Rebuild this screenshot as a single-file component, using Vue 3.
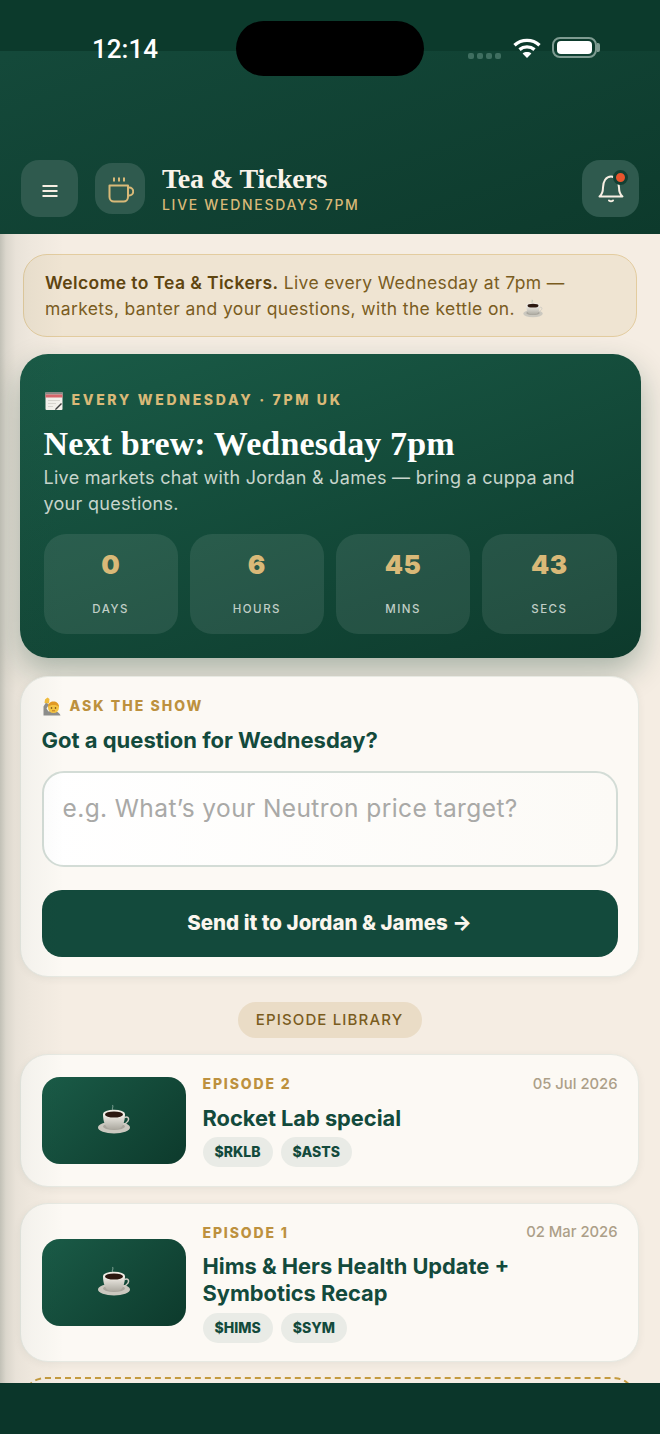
<script setup>
const timer = [
  { value: '0', label: 'DAYS' },
  { value: '6', label: 'HOURS' },
  { value: '45', label: 'MINS' },
  { value: '43', label: 'SECS' },
]
const episodes = [
  { id: 2, number: 'EPISODE 2', date: '05 Jul 2026', title: 'Rocket Lab special', tags: ['$RKLB', '$ASTS'] },
  { id: 1, number: 'EPISODE 1', date: '02 Mar 2026', title: 'Hims & Hers Health Update + Symbotics Recap', tags: ['$HIMS', '$SYM'] },
]
</script>

<template>
  <div class="page">
    <svg class="defs" aria-hidden="true">
      <defs>
        <linearGradient id="cupBody" x1="0" y1="0" x2="0" y2="1">
          <stop offset="0" stop-color="#f3f1ea" />
          <stop offset="1" stop-color="#aeaba2" />
        </linearGradient>
        <symbol id="cup" viewBox="0 0 36 32">
          <path d="M17 6c-2-1.500 1-2.500-.5-5" fill="none" stroke="#8fb0a2" stroke-width="1.200" opacity=".7" />
          <ellipse cx="18" cy="23.500" rx="16" ry="6" fill="#cbc8bf" />
          <ellipse cx="18" cy="22.500" rx="11" ry="3.500" fill="#a9a69d" />
          <path d="M28.500 13.500c3.500-1.500 5 1 3.500 3.500-1 1.800-3 3-5.500 3.500" fill="none" stroke="#cfccc3" stroke-width="1.500" />
          <path d="M7 10c0 7 2 14 7 15h8c5-1 7-8 7-15z" fill="url(#cupBody)" />
          <ellipse cx="18" cy="10" rx="11" ry="4.200" fill="#efece4" />
          <ellipse cx="18" cy="10.500" rx="9" ry="3.100" fill="#2c1810" />
        </symbol>
      </defs>
    </svg>

    <header class="header">
      <div class="status">
        <span class="clock">12:14</span>
        <span class="island"></span>
        <div class="status-right">
          <span class="signal"><i></i><i></i><i></i><i></i></span>
          <svg class="wifi" width="30" height="22" viewBox="0 0 30 22" fill="none" stroke="#fff" stroke-width="3.400">
            <path d="M2.500 8.200C9.500 1.800 20.500 1.800 27.500 8.200" />
            <path d="M7.500 12.600C11.800 9 18.200 9 22.500 12.600" />
            <path d="M15 21l-4.400-4.600c2.500-1.900 6.300-1.900 8.800 0z" fill="#fff" stroke="none" />
          </svg>
          <span class="battery"><span class="battery-fill"></span></span>
          <span class="battery-cap"></span>
        </div>
      </div>
      <div class="appbar">
        <button class="icon-btn menu">
          <svg width="16" height="14" viewBox="0 0 16 14" fill="none" stroke="#f7efe3" stroke-width="2">
            <path d="M0.500 2h15M0.500 7h15M0.500 12h15" />
          </svg>
        </button>
        <span class="logo">
          <svg width="28" height="28" viewBox="0 0 28 28" fill="none" stroke="#d9b978" stroke-width="2" stroke-linejoin="round">
            <path d="M8 2.500v4M13 2.500v4M18 2.500v4" />
            <path d="M3.500 10.500H22V22a4.500 4.500 0 0 1-4.500 4.500H8A4.500 4.500 0 0 1 3.500 22z" />
            <path d="M22 12.500h1.200a3.300 3.300 0 0 1 0 8H22" />
          </svg>
        </span>
        <div class="brand">
          <div class="brand-name">Tea &amp; Tickers</div>
          <div class="brand-sub">LIVE WEDNESDAYS 7PM</div>
        </div>
        <button class="icon-btn">
          <svg width="26" height="30" viewBox="0 0 26 30" fill="none" stroke="#f7efe3" stroke-width="2" stroke-linecap="round" stroke-linejoin="round">
            <path d="M1.500 22.500c2.500-2 3.500-5 3.500-9 0-6 3-11 8-11s8 5 8 11c0 4 1 7 3.500 9z" />
            <path d="M11 26.500c1.200 1 2.800 1 4 0" />
          </svg>
          <span class="dot"></span>
        </button>
      </div>
    </header>

    <main class="content">
      <div class="notice">
        <b>Welcome to Tea &amp; Tickers.</b> Live every Wednesday at 7pm —<br />markets, banter and your questions, with the kettle on. <svg class="notice-cup" width="22" height="20"><use href="#cup" /></svg>
      </div>

      <section class="hero">
        <div class="hero-kicker">
          <svg class="calendar" width="18" height="19" viewBox="0 0 18 19">
            <rect x="0.500" y="1" width="17" height="18" rx="1" fill="#f4f1ec" />
            <rect x="0.500" y="1" width="17" height="2.500" fill="#8a8a86" />
            <rect x="0.500" y="3.500" width="17" height="3" fill="#d8656a" />
            <path d="M3 9.500h12M3 12.500h8M3 15.500h5" stroke="#d9d6d0" stroke-width="1" />
            <path d="M10.500 17.500l5.500-5.500 1 1-5.500 5.500-1.500.500z" fill="#3f3f3f" />
          </svg>
          EVERY WEDNESDAY · 7PM UK
        </div>
        <h1 class="hero-title">Next brew: Wednesday 7pm</h1>
        <p class="hero-sub">Live markets chat with Jordan &amp; James — bring a cuppa and<br />your questions.</p>
        <div class="timer">
          <div v-for="t in timer" :key="t.label" class="cell">
            <div class="cell-value">{{ t.value }}</div>
            <div class="cell-label">{{ t.label }}</div>
          </div>
        </div>
      </section>

      <section class="card ask">
        <div class="ask-kicker">
          <svg class="person" width="18" height="19" viewBox="0 0 18 19">
            <path d="M0.500 18.500V9.500L3 5.500l3 2-2.500 4 2 3c2.500-1 6-1 8 0 2 .800 3.500 2.500 4 4z" fill="#8e8e8c" />
            <path d="M1.500 6L2 2.500 4.500 .500l2 1.500L6 6.500z" fill="#f2bd3c" />
            <circle cx="10.500" cy="10.500" r="5.500" fill="#f6c544" />
            <path d="M5 10c0-3.500 2.500-5.500 5.500-5.500S16 6.500 16 10c-1.500-1.500-3-2-5.500-2S6.500 8.500 5 10z" fill="#e39a24" />
            <circle cx="8.500" cy="11" r=".8" fill="#5a3a12" />
            <circle cx="12.500" cy="11" r=".8" fill="#5a3a12" />
            <path d="M9 13.800h3" stroke="#b56a1e" stroke-width=".8" />
          </svg>
          ASK THE SHOW
        </div>
        <h2 class="ask-title">Got a question for Wednesday?</h2>
        <div class="field">e.g. What’s your Neutron price target?</div>
        <button class="send">Send it to Jordan &amp; James →</button>
      </section>

      <div class="pill-row"><span class="pill">EPISODE LIBRARY</span></div>

      <article v-for="ep in episodes" :key="ep.id" class="card episode">
        <div class="thumb"><svg width="36" height="32"><use href="#cup" /></svg></div>
        <div class="ep-body">
          <div class="ep-top">
            <span class="ep-num">{{ ep.number }}</span>
            <span class="ep-date">{{ ep.date }}</span>
          </div>
          <h3 class="ep-title">{{ ep.title }}</h3>
          <div class="tags">
            <span v-for="tag in ep.tags" :key="tag" class="tag">{{ tag }}</span>
          </div>
        </div>
      </article>

      <div class="dashed"></div>
      <div class="edge"></div>
    </main>

    <footer class="bottom"></footer>
  </div>
</template>

<style scoped>
.defs {
  position: absolute;
  width: 0;
  height: 0;
}
.page {
  width: 660px;
  height: 1434px;
  display: flex;
  flex-direction: column;
  overflow: hidden;
  font-family: Inter, "Noto Sans", sans-serif;
  background: #f5ede3;
}
.header {
  height: 234px;
  flex: none;
  background: linear-gradient(160deg, #154b3c 0%, #0d3a2c 100%);
  display: flex;
  flex-direction: column;
}
.status {
  height: 51px;
  flex: none;
  background: #0c3a2c;
  position: relative;
}
.clock {
  position: absolute;
  left: 92px;
  top: 32px;
  color: #fff;
  font: 500 26px/34px Roboto, sans-serif;
}
.island {
  position: absolute;
  left: 236px;
  top: 21px;
  width: 188px;
  height: 55px;
  border-radius: 28px;
  background: #000;
}
.status-right {
  position: absolute;
  left: 468px;
  top: 37px;
  height: 22px;
}
.signal {
  position: absolute;
  left: 0;
  top: 16px;
  display: flex;
  gap: 3px;
}
.signal i {
  width: 6px;
  height: 6px;
  border-radius: 2px;
  background: #3f6e60;
}
.wifi {
  position: absolute;
  left: 44px;
  top: 0;
}
.battery {
  position: absolute;
  left: 84px;
  top: 0;
  box-sizing: content-box;
  width: 35px;
  height: 13px;
  padding: 2px 3px;
  border: 2px solid #7e9b91;
  border-radius: 8px;
}
.battery-fill {
  display: block;
  width: 100%;
  height: 100%;
  background: #fff;
  border-radius: 4px;
}
.battery-cap {
  position: absolute;
  left: 129px;
  top: 6px;
  width: 2.500px;
  height: 9px;
  background: #7e9b91;
  border-radius: 0 2px 2px 0;
}
.appbar {
  display: flex;
  align-items: center;
  padding: 0 21px;
  margin-top: 109px;
  height: 57px;
}
.icon-btn {
  width: 57px;
  height: 57px;
  flex: none;
  border: 0;
  padding: 0;
  border-radius: 18px;
  background: #2f5a4e;
  display: flex;
  align-items: center;
  justify-content: center;
  position: relative;
}
.menu svg {
  margin-top: 5px;
}
.logo {
  width: 50px;
  height: 51px;
  flex: none;
  margin-left: 17px;
  border-radius: 17px;
  background: #2f5a4e;
  display: flex;
  align-items: center;
  justify-content: center;
}
.brand {
  margin-left: 17px;
  flex: 1;
}
.brand-name {
  font: 700 28px/32px "Liberation Serif", serif;
  color: #f9f3e9;
  letter-spacing: -0.3px;
}
.brand-sub {
  font-size: 14px;
  line-height: 18px;
  font-weight: 500;
  letter-spacing: 1.700px;
  color: #d9b978;
  margin-top: 1px;
}
.dot {
  position: absolute;
  right: 11px;
  top: 10px;
  width: 9px;
  height: 9px;
  border-radius: 50%;
  background: #e8552d;
  border: 3px solid #123f32;
}
.content {
  flex: 1;
  min-height: 0;
  overflow: hidden;
  position: relative;
  padding: 20px 21px 0 20px;
  display: flex;
  flex-direction: column;
  background: #f5ede3;
}
.edge {
  position: absolute;
  inset: 0 auto 0 0;
  width: 64px;
  pointer-events: none;
  background: linear-gradient(90deg, rgba(40, 60, 50, 0.25) 0, rgba(40, 60, 50, 0.13) 6px, rgba(40, 60, 50, 0.06) 16px, rgba(40, 60, 50, 0.03) 32px, rgba(40, 60, 50, 0) 64px);
}
.notice {
  flex: none;
  margin: 0 2px 0 3px;
  height: 83px;
  box-sizing: border-box;
  padding: 15px 21px;
  border: 1.500px solid #e3cc9f;
  border-radius: 24px;
  background: #efe4d2;
  color: #7a5c1e;
  font-size: 17.500px;
  line-height: 25.500px;
  letter-spacing: 0.38px;
  white-space: nowrap;
}
.notice b {
  font-weight: 600;
  color: #5f4510;
}
.notice-cup {
  vertical-align: -4px;
  margin-left: 2px;
}
.hero {
  flex: none;
  margin: 17px -0.500px 0;
  margin-right: -1.500px;
  height: 304px;
  box-sizing: border-box;
  padding: 34px 24px 0;
  border-radius: 28px;
  background: linear-gradient(160deg, #1a5b47 0%, #0d3a2c 100%);
  box-shadow: 0 14px 32px rgba(13, 58, 44, 0.32);
  color: #fff;
}
.hero-kicker {
  display: flex;
  align-items: center;
  font-size: 14px;
  line-height: 24px;
  font-weight: 800;
  letter-spacing: 2.670px;
  color: #d9b978;
}
.calendar {
  margin: 0 9px 0 1px;
  flex: none;
}
.hero-title {
  margin: 12px 0 0;
  font: 700 34px/40px "Liberation Serif", serif;
  letter-spacing: 0.150px;
}
.hero-sub {
  margin: 1px 0 0;
  font-size: 18px;
  line-height: 25.500px;
  letter-spacing: 0.28px;
  color: #c7d5cc;
}
.timer {
  margin-top: 18px;
  display: grid;
  grid-template-columns: repeat(4, 1fr);
  gap: 12px;
}
.cell {
  height: 100px;
  border-radius: 22px;
  background: rgba(255, 255, 255, 0.09);
  text-align: center;
}
.cell-value {
  padding-top: 14px;
  font-size: 26px;
  line-height: 34px;
  font-weight: 900;
  color: #d9b978;
  letter-spacing: 0.5px;
}
.cell-label {
  margin-top: 19px;
  font-size: 11.500px;
  line-height: 16px;
  font-weight: 500;
  letter-spacing: 1.500px;
  color: #c0cec6;
}
.card {
  flex: none;
  background: #fcf9f4;
  border: 1.500px solid #e7e9e2;
  border-radius: 28px;
  box-sizing: border-box;
  box-shadow: 0 2px 8px rgba(13, 58, 44, 0.06);
}
.ask {
  margin-top: 18px;
  height: 301px;
  padding: 17px 20.500px 0;
}
.ask-kicker {
  display: flex;
  align-items: center;
  font-size: 14px;
  line-height: 24px;
  font-weight: 800;
  letter-spacing: 2.030px;
  color: #bd913e;
}
.person {
  flex: none;
  margin: 0 9px 0 1px;
}
.ask-title {
  margin: 8px 0 0;
  font-size: 22px;
  line-height: 28px;
  font-weight: 700;
  color: #134a3c;
}
.field {
  margin-top: 17px;
  height: 96px;
  box-sizing: border-box;
  padding: 20px 19px;
  border: 2px solid #d3dcd6;
  border-radius: 22px;
  background: linear-gradient(90deg, #fff, #fcfaf6);
  color: #a9a9a7;
  font-size: 24.500px;
  line-height: 30px;
  letter-spacing: 0.4px;
}
.send {
  display: block;
  width: 100%;
  margin-top: 23px;
  height: 67px;
  padding: 0 0 2px;
  border: 0;
  border-radius: 20px;
  background: #134a3c;
  color: #fbf6ee;
  font-family: inherit;
  font-size: 20.500px;
  font-weight: 800;
}
.pill-row {
  flex: none;
  margin-top: 25px;
  display: flex;
  justify-content: center;
}
.pill {
  height: 36px;
  width: 184px;
  box-sizing: border-box;
  border-radius: 18px;
  background: #eadcc6;
  color: #7a5c1e;
  font-size: 15px;
  line-height: 36px;
  font-weight: 500;
  letter-spacing: 1.150px;
  text-align: center;
}
.episode {
  margin-top: 16px;
  padding: 18.500px 20.500px;
  display: flex;
  align-items: center;
  gap: 17px;
}
.thumb {
  width: 144px;
  height: 87px;
  flex: none;
  border-radius: 18px;
  background: linear-gradient(135deg, #1a5b47 0%, #0d3a2c 100%);
  display: flex;
  align-items: center;
  justify-content: center;
}
.ep-body {
  flex: 1;
  min-width: 0;
}
.ep-top {
  display: flex;
  justify-content: space-between;
  align-items: center;
  height: 20px;
}
.ep-num {
  font-size: 14px;
  font-weight: 800;
  letter-spacing: 1.850px;
  color: #bd913e;
}
.ep-date {
  font-size: 14.800px;
  font-weight: 500;
  color: #ac9f88;
}
.ep-title {
  margin: 11px 0 0;
  max-width: 330px;
  font-size: 21.800px;
  line-height: 27px;
  font-weight: 700;
  color: #134a3c;
}
.tags {
  margin-top: 5.500px;
  display: flex;
  gap: 8px;
}
.tag {
  height: 30px;
  padding: 0 12px;
  border-radius: 15px;
  background: #e9ebe6;
  color: #134a3c;
  font-size: 14px;
  line-height: 30px;
  font-weight: 800;
}
.dashed {
  flex: none;
  margin: 15px 3px 0;
  height: 60px;
  border: 2px dashed #c49a3e;
  border-radius: 22px;
}
.bottom {
  height: 51px;
  flex: none;
  background: #0b362a;
}
</style>
